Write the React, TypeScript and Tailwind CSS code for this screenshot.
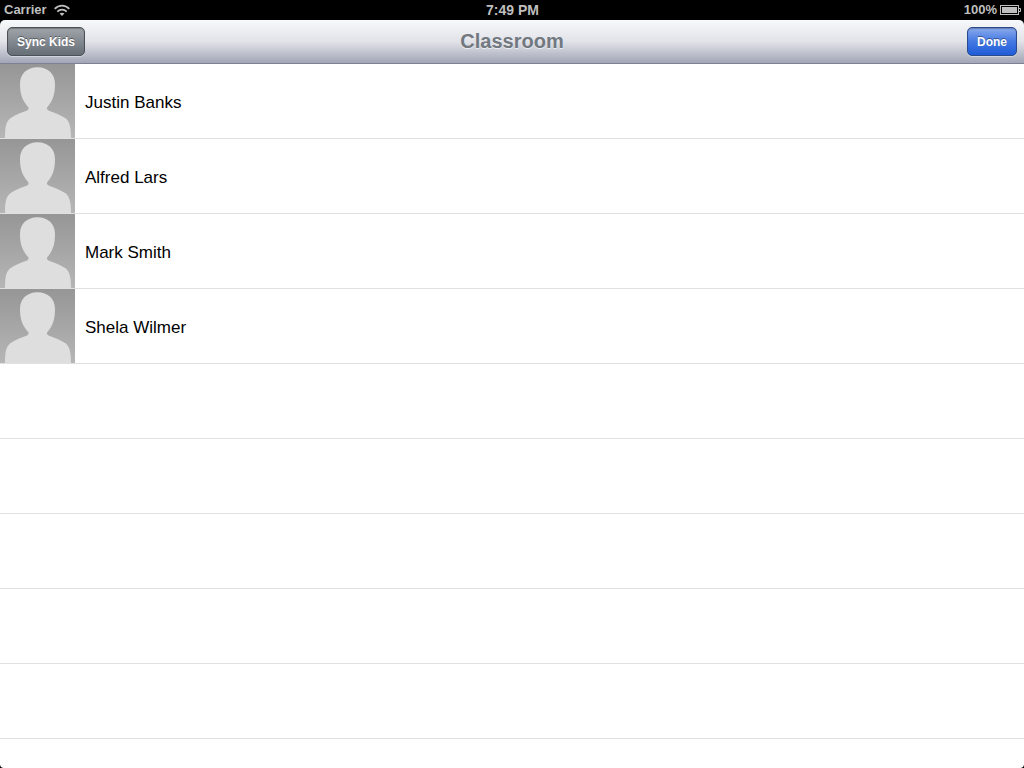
const kids = ["Justin Banks", "Alfred Lars", "Mark Smith", "Shela Wilmer"];
const emptyRows = [0, 1, 2, 3, 4, 5];

const WifiIcon = () => (
  <svg width="16" height="12" viewBox="0 0 16 12" fill="none" stroke="#bfbfbf" strokeWidth="1.8">
    <path d="M0.7 4.9C4.8 0.5 11.2 0.5 15.3 4.9" />
    <path d="M3.3 7.7C6 5 10 5 12.7 7.7" />
    <path d="M5.6 9.6C7 8.3 9 8.3 10.4 9.6L8 12Z" fill="#bfbfbf" stroke="none" />
  </svg>
);

const BatteryIcon = () => (
  <svg width="21" height="10" viewBox="0 0 21 10" fill="none">
    <rect x="0.5" y="0.5" width="18" height="9" stroke="#bfbfbf" />
    <rect x="2" y="2" width="15" height="6" fill="#bfbfbf" />
    <path d="M19 3.5H20.5V6.5H19" stroke="#bfbfbf" />
  </svg>
);

const Avatar = () => (
  <svg
    className="h-full w-[75px] shrink-0 bg-linear-to-b from-[#969696] to-[#b6b6b6]"
    viewBox="0 0 75 74"
    preserveAspectRatio="none"
    fill="#dedede">
    <path d="M37.5 3.3C27 3.3 20 10 20 20C20 30 22 36 28.5 43.5C28.8 45.3 28 46 26.5 46.7C21 48.8 15 50.5 10 54.5C6 58 5 63 5 74H71C71 63 69.5 58 66 54.5C61 51 54 48.8 49 46.7C47.2 45.9 46.6 45 47 43.5C53 37 55 30 55 20C55 10 48 3.3 37.5 3.3Z" />
  </svg>
);

const StatusBar = () => (
  <div className="grid h-5 grid-cols-3 items-center bg-black pr-[3px] pl-1 text-[13px] leading-5 font-bold text-[#bfbfbf]">
    <div className="flex items-center gap-[7px]">
      <span>Carrier</span>
      <WifiIcon />
    </div>
    <span className="text-center text-sm leading-[18px]">7:49 PM</span>
    <div className="flex items-center justify-end gap-[3px]">
      <span>100%</span>
      <BatteryIcon />
    </div>
  </div>
);

const NavBar = () => (
  <header className="grid h-11 grid-cols-[1fr_auto_1fr] items-center rounded-t-[5px] border-b border-[#7b8094] bg-linear-to-b from-[#f8f9fa] via-[#e2e3e9] to-[#a2a6b6] px-[7px]">
    <button
      type="button"
      className="h-[29px] justify-self-start rounded-[5px] border border-[#4c5157] bg-linear-to-b from-[#a0a5aa] to-[#666e76] px-[9px] text-xs font-bold text-white shadow-[0_1px_0_rgba(255,255,255,0.4),inset_0_1px_1px_rgba(0,0,0,0.25)] [text-shadow:0_-1px_0_rgba(0,0,0,0.4)]">
      Sync Kids
    </button>
    <h1 className="pb-0.5 text-xl leading-6 font-bold text-[#717880] [text-shadow:0_1px_0_rgba(255,255,255,0.6)]">
      Classroom
    </h1>
    <button
      type="button"
      className="h-[29px] justify-self-end rounded-[5px] border border-[#2b4a8c] bg-linear-to-b from-[#8aa9ec] via-[#4278e2] to-[#1f5cd8] px-[9px] text-xs font-bold text-white shadow-[0_1px_0_rgba(255,255,255,0.4),inset_0_1px_1px_rgba(0,0,0,0.25)] [text-shadow:0_-1px_0_rgba(0,0,0,0.4)]">
      Done
    </button>
  </header>
);

const App = () => {
  return (
    <div className="flex h-screen flex-col bg-black font-['Liberation_Sans',Arial,sans-serif]">
      <StatusBar />
      <NavBar />
      <main className="min-h-0 flex-1 overflow-hidden rounded-b-[4px] bg-white">
        <ul>
          {kids.map((name) => (
            <li
              key={name}
              className="flex h-[75px] items-center gap-[10px] border-b border-[#e0e0e0]">
              <Avatar />
              <span className="pt-1 text-[17px] leading-6 text-black">{name}</span>
            </li>
          ))}
          {emptyRows.map((row) => (
            <li key={row} aria-hidden="true" className="h-[75px] border-b border-[#e0e0e0]" />
          ))}
        </ul>
      </main>
    </div>
  );
};

export default App;
